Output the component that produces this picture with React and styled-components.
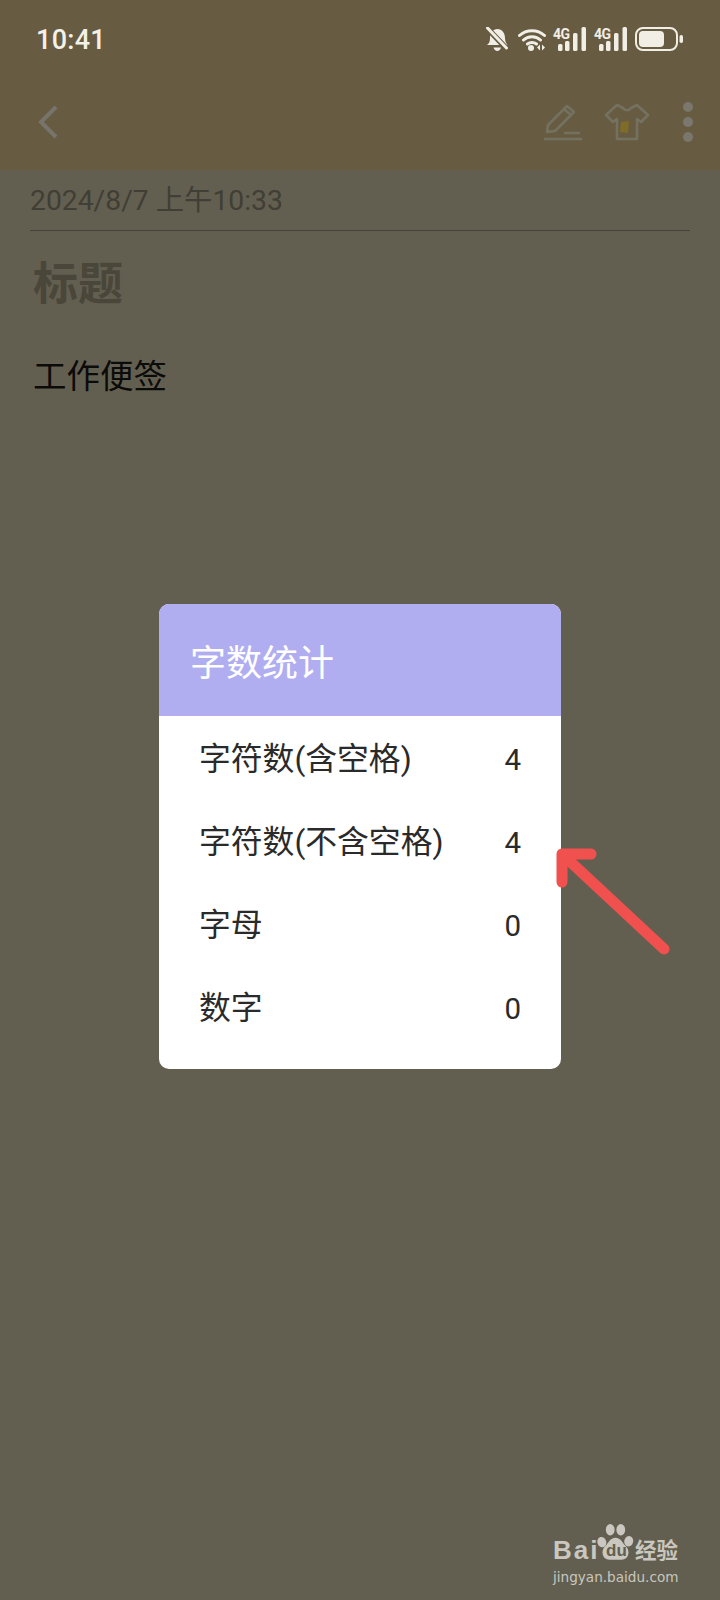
import React from "react";
import styled, { createGlobalStyle } from "styled-components";

const GlobalStyle = createGlobalStyle`
  html, body {
    margin: 0;
    padding: 0;
    background: #635f50;
    overflow: hidden;
  }
  * { box-sizing: border-box; }
`;

const FONT = `Roboto, "Noto Sans CJK SC", sans-serif`;

const rows = [
  { label: "字符数(含空格)", value: 4 },
  { label: "字符数(不含空格)", value: 4 },
  { label: "字母", value: 0 },
  { label: "数字", value: 0 },
];

function SignalIcon() {
  return (
    <SignalWrap>
      <SmallG>4G</SmallG>
      <svg width="34" height="24" viewBox="0 0 34 24">
        <rect x="5" y="17" width="4.5" height="7" rx="1.5" fill="#f1eee6" />
        <rect x="12" y="14" width="4.5" height="10" rx="1.5" fill="#f1eee6" />
        <rect x="20" y="6" width="4.5" height="18" rx="1.5" fill="#f1eee6" />
        <rect x="28.5" y="0" width="4.5" height="24" rx="1.5" fill="#f1eee6" />
      </svg>
    </SignalWrap>
  );
}

function App() {
  return (
    <Page>
      <GlobalStyle />
      <Header>
        <StatusBar>
          <Clock>10:41</Clock>
          <StatusIcons>
            <BellIcon width="22" height="24" viewBox="0 0 22 24">
              <path d="M1 18c2-1.500 3-3 3-7 0-5 3-9 7.500-9S19 6 19 11c0 3 1 5 2.500 7z" fill="#f1eee6" />
              <path d="M7.500 20.500h7.500c-.5 2-2 3.500-3.700 3.500s-3.300-1.500-3.800-3.500z" fill="#f1eee6" />
              <path d="M1 1l20 21" stroke="#675c42" strokeWidth="5.500" />
              <path d="M1.500 1l19 20" stroke="#f1eee6" strokeWidth="3" strokeLinecap="round" />
            </BellIcon>
            <svg width="28" height="23" viewBox="0 0 28 23">
              <path d="M1.500 7.500c7-6.500 18-6.500 25 0M5.500 12c4.500-4.500 12.500-4.500 17 0M9.500 16c2.500-2 6.500-2 9 0" stroke="#f1eee6" strokeWidth="3" fill="none" strokeLinecap="round" />
              <circle cx="13" cy="20" r="3" fill="#f1eee6" />
              <path d="M22 16.500v6l-3-3zM24 16.500v6l3-3z" fill="#f1eee6" />
            </svg>
            <SignalIcon />
            <SignalIcon />
            <svg width="48" height="24" viewBox="0 0 48 24">
              <rect x="1" y="1" width="41" height="22" rx="7" stroke="#f1eee6" strokeWidth="2" fill="none" />
              <rect x="4" y="4" width="25" height="16" rx="4" fill="#f1eee6" />
              <rect x="44.500" y="8" width="3.500" height="8" rx="1.700" fill="#f1eee6" />
            </svg>
          </StatusIcons>
        </StatusBar>
        <ToolBar>
          <svg width="24" height="36" viewBox="0 0 24 36">
            <path d="M20 3L5 18l15 15" stroke="#77746b" strokeWidth="4" fill="none" />
          </svg>
          <ToolIcons>
            <svg width="38" height="38" viewBox="0 0 38 38">
              <path d="M3 29l1-7L23 3l7 6-19 19z" stroke="#757160" strokeWidth="2.600" fill="none" strokeLinejoin="round" />
              <path d="M20 6l7 6" stroke="#757160" strokeWidth="2.600" />
              <path d="M21 30h14M1 36h36" stroke="#757160" strokeWidth="2.600" strokeLinecap="round" />
            </svg>
            <svg width="46" height="38" viewBox="0 0 46 38">
              <path d="M13 2l6 3c2 3 6 3 8 0l6-3 11 10-7 7-4-3v20H13V16l-4 3-7-7z" stroke="#757160" strokeWidth="2.600" fill="none" strokeLinejoin="round" />
              <path d="M17 19l8-1-1 12-8-1z" fill="#7f6c26" />
            </svg>
            <Dots>
              <Dot />
              <Dot />
              <Dot />
            </Dots>
          </ToolIcons>
        </ToolBar>
      </Header>

      <Note>
        <DateLine>2024/8/7 上午10:33</DateLine>
        <NoteTitle>标题</NoteTitle>
        <NoteBody>工作便签</NoteBody>
      </Note>

      <Overlay>
        <Dialog>
          <DialogHeader>字数统计</DialogHeader>
          <DialogBody>
            {rows.map((row) => (
              <Row key={row.label}>
                <span>{row.label}</span>
                <Value>{row.value}</Value>
              </Row>
            ))}
          </DialogBody>
        </Dialog>
      </Overlay>

      <Arrow width="120" height="116" viewBox="0 0 120 116">
        <path d="M7 8l102 95M7 8h29M7 8v28" stroke="#f0504e" strokeWidth="11" fill="none" strokeLinecap="round" strokeLinejoin="round" />
      </Arrow>

      <Watermark>
        <LogoLine>
          <Bai>Bai</Bai>
          <PawWrap>
            <svg width="37" height="40" viewBox="0 0 42 44">
              <ellipse cx="5.500" cy="21" rx="5" ry="6" fill="#c9c7bf" transform="rotate(-15 5.500 21)" />
              <ellipse cx="15" cy="7" rx="5" ry="6.500" fill="#c9c7bf" />
              <ellipse cx="27" cy="7" rx="5" ry="6.500" fill="#c9c7bf" />
              <ellipse cx="36" cy="20" rx="5" ry="6" fill="#c9c7bf" transform="rotate(15 36 20)" />
              <path d="M21 16c-6 0-8 6-12 10-5 5-3 15 5 15h14c8 0 10-10 5-15-4-4-6-10-12-10z" fill="#c9c7bf" />
            </svg>
            <Du>du</Du>
          </PawWrap>
          <Jing>经验</Jing>
        </LogoLine>
        <Domain>jingyan.baidu.com</Domain>
      </Watermark>
    </Page>
  );
}

export default App;

const Page = styled.div`
  position: relative;
  width: 720px;
  height: 1600px;
  overflow: hidden;
  background: #635f50;
  font-family: ${FONT};
`;

const Header = styled.header`
  height: 170px;
  background: #675c42;
  padding: 0 27px 0 36px;
`;

const StatusBar = styled.div`
  height: 78px;
  display: flex;
  align-items: center;
  justify-content: space-between;
  margin-right: 10px;
`;

const Clock = styled.div`
  color: #f4f1e8;
  font-size: 27px;
  font-weight: 500;
  letter-spacing: 0.3px;
  padding-top: 2px;
`;

const StatusIcons = styled.div`
  display: flex;
  align-items: center;
  gap: 7px;
`;

const BellIcon = styled.svg`
  margin-right: 3px;
`;

const SignalWrap = styled.div`
  position: relative;
  width: 34px;
  height: 24px;
  svg {
    position: absolute;
    left: 0;
    bottom: 0;
  }
`;

const SmallG = styled.span`
  position: absolute;
  left: 0;
  top: 1px;
  color: #f1eee6;
  font-size: 14px;
  font-weight: 700;
  line-height: 13px;
  letter-spacing: -0.5px;
`;

const ToolBar = styled.div`
  display: flex;
  align-items: center;
  justify-content: space-between;
  height: 88px;
`;

const ToolIcons = styled.div`
  display: flex;
  align-items: center;
  gap: 22px;
`;

const Dots = styled.div`
  display: flex;
  flex-direction: column;
  gap: 5px;
  margin-left: 11px;
`;

const Dot = styled.div`
  width: 10px;
  height: 10px;
  border-radius: 50%;
  background: #7a776d;
`;

const Note = styled.main`
  padding: 10px 30px 0 30px;
`;

const DateLine = styled.div`
  height: 51px;
  line-height: 41px;
  font-size: 28.3px;
  color: #403e35;
  border-bottom: 1px solid #45433a;
`;

const NoteTitle = styled.h1`
  margin: 28px 0 0 3px;
  font-size: 45px;
  line-height: 52px;
  font-weight: 700;
  color: #4a4639;
`;

const NoteBody = styled.p`
  margin: 44px 0 0 3px;
  font-size: 33.5px;
  line-height: 44px;
  color: #0b0b0a;
`;

const Overlay = styled.div`
  position: absolute;
  inset: 0;
  padding: 604px 159px 0;
`;

const Dialog = styled.section`
  height: 465px;
  border-radius: 10px;
  overflow: hidden;
  background: #fff;
`;

const DialogHeader = styled.div`
  height: 112px;
  display: flex;
  align-items: center;
  padding-left: 31px;
  background: #b0aef0;
  color: #fff;
  font-size: 36px;
`;

const DialogBody = styled.div`
  margin-top: -2px;
  padding: 0 40px 0 40px;
`;

const Row = styled.div`
  display: flex;
  align-items: center;
  justify-content: space-between;
  height: 83px;
  font-size: 31.8px;
  color: #2a2a2a;
`;

const Value = styled.span`
  font-size: 29.5px;
  line-height: 36px;
  padding-top: 9px;
`;

const Arrow = styled.svg`
  position: absolute;
  left: 555px;
  top: 846px;
`;

const Watermark = styled.div`
  position: absolute;
  left: 553px;
  top: 1523px;
  width: 140px;
  color: #c9c7bf;
`;

const LogoLine = styled.div`
  display: flex;
  align-items: flex-end;
  height: 40px;
`;

const Bai = styled.span`
  font-family: "Liberation Sans", sans-serif;
  font-size: 26px;
  line-height: 26px;
  font-weight: 700;
  letter-spacing: 2px;
  width: 44px;
  flex: none;
`;

const PawWrap = styled.div`
  position: relative;
  width: 37px;
  height: 40px;
  flex: none;
`;

const Du = styled.span`
  position: absolute;
  left: 9px;
  bottom: 3px;
  color: #635f50;
  font-family: "Liberation Sans", sans-serif;
  font-size: 17px;
  line-height: 18px;
  font-weight: 700;
`;

const Jing = styled.span`
  margin-left: 1px;
  font-size: 21.5px;
  line-height: 24px;
  font-weight: 700;
  white-space: nowrap;
`;

const Domain = styled.div`
  margin-top: 5px;
  font-family: "DejaVu Sans", sans-serif;
  font-size: 13.6px;
  line-height: 18px;
  white-space: nowrap;
`;
